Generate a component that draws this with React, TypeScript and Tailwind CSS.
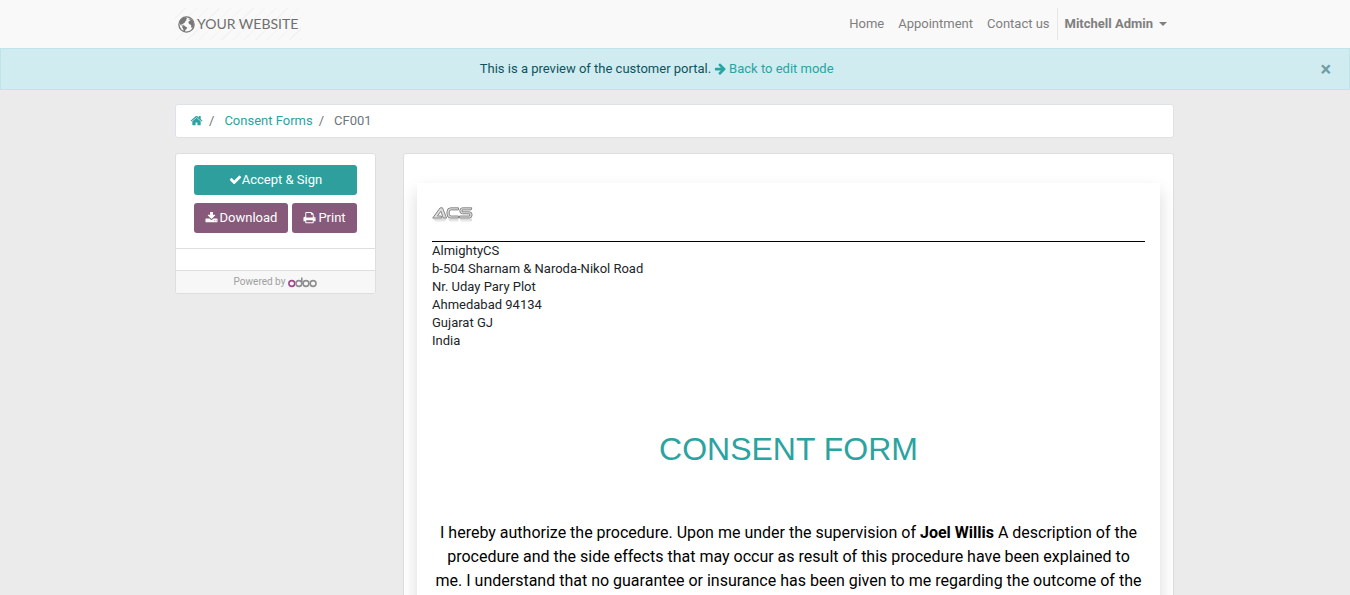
import React from "react";

const icons = {
  home: "M1472 992v480q0 26-19 45t-45 19h-384v-384h-256v384h-384q-26 0-45-19t-19-45v-480q0-1 .5-3t.5-3l575-474 575 474q1 2 1 6zm223-69l-62 74q-8 9-21 11h-3q-13 0-21-7l-692-577-692 577q-12 8-24 7-13-2-21-11l-62-74q-8-10-7-23.5t11-21.5l719-599q32-26 76-26t76 26l244 204v-195q0-14 9-23t23-9h192q14 0 23 9t9 23v408l219 182q10 8 11 21.5t-7 23.5z",
  arrow: "M1600 960q0 54-37 91l-651 651q-39 37-91 37-51 0-90-37l-75-75q-38-38-38-91t38-91l293-293h-704q-52 0-84.5-37.5t-32.5-90.5v-128q0-53 32.5-90.5t84.5-37.5h704l-293-294q-38-36-38-90t38-90l75-75q38-38 90-38 53 0 91 38l651 651q37 35 37 90z",
  check: "M1671 566q0 40-28 68l-724 724-136 136q-28 28-68 28t-68-28l-136-136-362-362q-28-28-28-68t28-68l136-136q28-28 68-28t68 28l294 295 656-657q28-28 68-28t68 28l136 136q28 28 28 68z",
  download: "M1344 1344q0-26-19-45t-45-19-45 19-19 45 19 45 45 19 45-19 19-45zm256 0q0-26-19-45t-45-19-45 19-19 45 19 45 45 19 45-19 19-45zm128-224v320q0 40-28 68t-68 28h-1472q-40 0-68-28t-28-68v-320q0-40 28-68t68-28h465l135 136q58 56 136 56t136-56l136-136h464q40 0 68 28t28 68zm-325-569q17 41-14 70l-448 448q-18 19-45 19t-45-19l-448-448q-31-29-14-70 17-39 59-39h256v-448q0-26 19-45t45-19h256q26 0 45 19t19 45v448h256q42 0 59 39z",
  print: "M448 1536h896v-256h-896v256zm0-640h896v-384h-160q-40 0-68-28t-28-68v-160h-640v640zm1152 64q0-26-19-45t-45-19-45 19-19 45 19 45 45 19 45-19 19-45zm128 0v416q0 13-9.5 22.5t-22.5 9.5h-224v160q0 40-28 68t-68 28h-960q-40 0-68-28t-28-68v-160h-224q-13 0-22.5-9.5t-9.5-22.5v-416q0-79 56.5-135.5t135.5-56.5h64v-544q0-40 28-68t68-28h672q40 0 88 20t76 48l152 152q28 28 48 76t20 88v256h64q79 0 135.5 56.5t56.5 135.5z",
};

function Icon({ name }: { name: keyof typeof icons }) {
  return (
    <svg viewBox="0 128 1792 1792" className="size-[13px] shrink-0" fill="currentColor" aria-hidden="true">
      <path d={icons[name]} />
    </svg>
  );
}

function Globe() {
  return (
    <svg viewBox="0 0 17 17" className="size-[17px] shrink-0" aria-hidden="true">
      <circle cx="8.500" cy="8.500" r="7.600" fill="none" stroke="#777" strokeWidth="1.300" />
      <path
        fill="#777"
        d="M2.600 3.800 5 1.900l2.900-.6 1.200.9-1.100 1 .9.700-1.500 1.200-.4 1.300-1.600.8-.2 1.300-1.300-.6-.7.900 1.200.6 1.500-.1 1.800 1.400 1.400.6-.5 1.700-1.300.9-.7 2-.9.200-.5-3.100-1-1.500.2-1.500-1.900-1L1.300 6.500zM10.600 2.600l2.100.200 2.200 2.400 1 2.700-.5 2.600-1.500 1.700-.8-1.500.1-1.700-1.700-.7-1.200-1.500.7-1.800 1.500-.6-.3-.8-1.300.1z"
      />
    </svg>
  );
}

function AcsLogo() {
  return (
    <svg viewBox="0 0 42 18" className="h-[18px] w-[42px]" role="img" aria-label="ACS">
      <defs>
        <linearGradient id="fade" x1="0" y1="0" x2="0" y2="1">
          <stop offset="0" stopColor="#999" stopOpacity=".45" />
          <stop offset="1" stopColor="#999" stopOpacity="0" />
        </linearGradient>
      </defs>
      <path
        fill="#ddd"
        stroke="#888"
        strokeWidth="1"
        strokeLinejoin="round"
        d="M.7 13 8.200 2.800h2.300l4.100 10.200h-3.400L8.900 6.200 5.500 11h3.600l.9 2zM26.500 2.800h-7.800q-3.700 0-3.700 4v2.200q0 4 3.700 4h7.800V11h-7.300q-2 0-2-2.100V6.900q0-2 2-2h7.300zM39.800 2.800h-9.300q-2.700 0-2.700 3 0 3 2.700 3h7.200V11H27.500v2h9.800q2.800 0 2.800-3.200 0-3-2.800-3h-7.100V4.900h9z"
      />
      <path fill="url(#fade)" d="M1 13.600h14l-3 4H4zM16 13.600h10.500v4H18zM28 13.600h12v4H29z" />
    </svg>
  );
}

function OdooLogo() {
  return (
    <svg viewBox="0 0 29 11" className="h-[11px] w-[29px]" fill="none" strokeWidth="1.600" role="img" aria-label="odoo">
      <circle cx="3.800" cy="6.500" r="2.900" stroke="#a24689" />
      <g stroke="#8f8f8f">
        <circle cx="10.900" cy="6.500" r="2.900" />
        <path d="M13.800 6.600V.6" />
        <circle cx="18" cy="6.500" r="2.900" />
        <circle cx="25.100" cy="6.500" r="2.900" />
      </g>
    </svg>
  );
}

const address = [
  "AlmightyCS",
  "b-504 Sharnam & Naroda-Nikol Road",
  "Nr. Uday Pary Plot",
  "Ahmedabad 94134",
  "Gujarat GJ",
  "India",
];

const secondaryButton =
  "flex h-[30px] items-center justify-center gap-[2px] rounded-[3px] bg-[#875a7b] text-white";

export default function App() {
  return (
    <div className="min-h-screen bg-[#ebebeb] font-[Roboto,sans-serif] text-[13px] leading-[18px] text-[#212529]">
      <header className="bg-[#f9f9f9]">
        <div className="mx-auto flex h-12 max-w-[1000px] items-center justify-between pr-px">
          <a
            href="#"
            className="flex h-8 items-center bg-[repeating-linear-gradient(135deg,#f9f9f9_0_7px,#f2f2f2_7px_8px)] px-[3px] font-[Lato,sans-serif] text-[14px] text-[#6f6f6f]"
          >
            <Globe />
            <span className="pl-[2px]">YOUR WEBSITE</span>
          </a>
          <nav className="flex items-center text-[#7f7f7f]">
            <a href="#" className="px-[7px]">Home</a>
            <a href="#" className="px-[7px]">Appointment</a>
            <a href="#" className="px-[7px]">Contact us</a>
            <button className="flex h-8 items-center gap-[6px] border-l border-[#e7e7e7] px-[7px] font-bold">
              Mitchell Admin
              <span className="border-x-4 border-t-4 border-x-transparent border-t-current" />
            </button>
          </nav>
        </div>
      </header>

      <div className="flex h-[42px] items-center border border-[#bee5eb] bg-[#d1ecf0] pr-[18px] text-[#0c5460]">
        <p className="flex flex-1 items-center justify-center">
          This is a preview of the customer portal.
          <a href="#" className="ml-[3px] flex items-center gap-[2px] text-[#2ba3a1]">
            <Icon name="arrow" />
            Back to edit mode
          </a>
        </p>
        <button aria-label="Close" className="pl-2 text-[20px] font-bold text-[#6d9fa6]">
          ×
        </button>
      </div>

      <main className="mx-auto max-w-[1000px] pt-[14px] pr-px">
        <nav
          aria-label="Breadcrumb"
          className="flex h-[34px] items-center rounded-[3px] border border-[#dee2e6] bg-white px-[14px] text-[#6c757d]"
        >
          <a href="#" aria-label="Home" className="text-[#2ba3a1]">
            <Icon name="home" />
          </a>
          <span className="mr-[10px] ml-[6px]">/</span>
          <a href="#" className="text-[#2ba3a1]">Consent Forms</a>
          <span className="mr-[10px] ml-[6px]">/</span>
          <span>CF001</span>
        </nav>

        <div className="mt-[15px] flex items-start gap-[27px]">
          <aside className="w-[201px] shrink-0 overflow-hidden rounded-[3px] border border-[#dedede] bg-white">
            <div className="flex flex-col gap-2 px-[18px] pt-[11px] pb-[15px]">
              <button className="flex h-[30px] items-center justify-center rounded-[3px] bg-[#2f9f9d] text-white">
                <Icon name="check" />
                Accept &amp; Sign
              </button>
              <div className="flex gap-1">
                <button className={`${secondaryButton} w-[94px]`}>
                  <Icon name="download" />
                  Download
                </button>
                <button className={`${secondaryButton} flex-1`}>
                  <Icon name="print" />
                  Print
                </button>
              </div>
            </div>
            <div className="h-[22px] border-t border-[#dedede]" />
            <div className="flex h-[23px] items-center justify-center gap-[3px] border-t border-[#dedede] bg-[#f7f7f7] text-[10px] text-[#a0a0a0]">
              Powered by
              <OdooLogo />
            </div>
          </aside>

          <section className="min-w-0 flex-1 rounded-[3px] border border-[#dedede] bg-white px-[13px] pt-[29px] pb-8">
            <article className="bg-white px-[15px] pt-[22px] pb-10 shadow-[0_8px_16px_rgba(0,0,0,0.15)]">
              <AcsLogo />
              <address className="mt-[18px] border-t border-black not-italic">
                {address.map((line) => (
                  <div key={line}>{line}</div>
                ))}
              </address>
              <h1 className="mt-[79px] text-center font-['Liberation_Sans',sans-serif] text-[32px] leading-10 text-[#2ba3a1]">
                CONSENT FORM
              </h1>
              <p className="mt-[52px] text-center text-[16px] leading-6 text-black">
                I hereby authorize the procedure. Upon me under the supervision of{" "}
                <b>Joel Willis</b> A description of the procedure and the side effects that may
                occur as result of this procedure have been explained to me. I understand that no
                guarantee or insurance has been given to me regarding the outcome of the
              </p>
            </article>
          </section>
        </div>
      </main>
    </div>
  );
}
